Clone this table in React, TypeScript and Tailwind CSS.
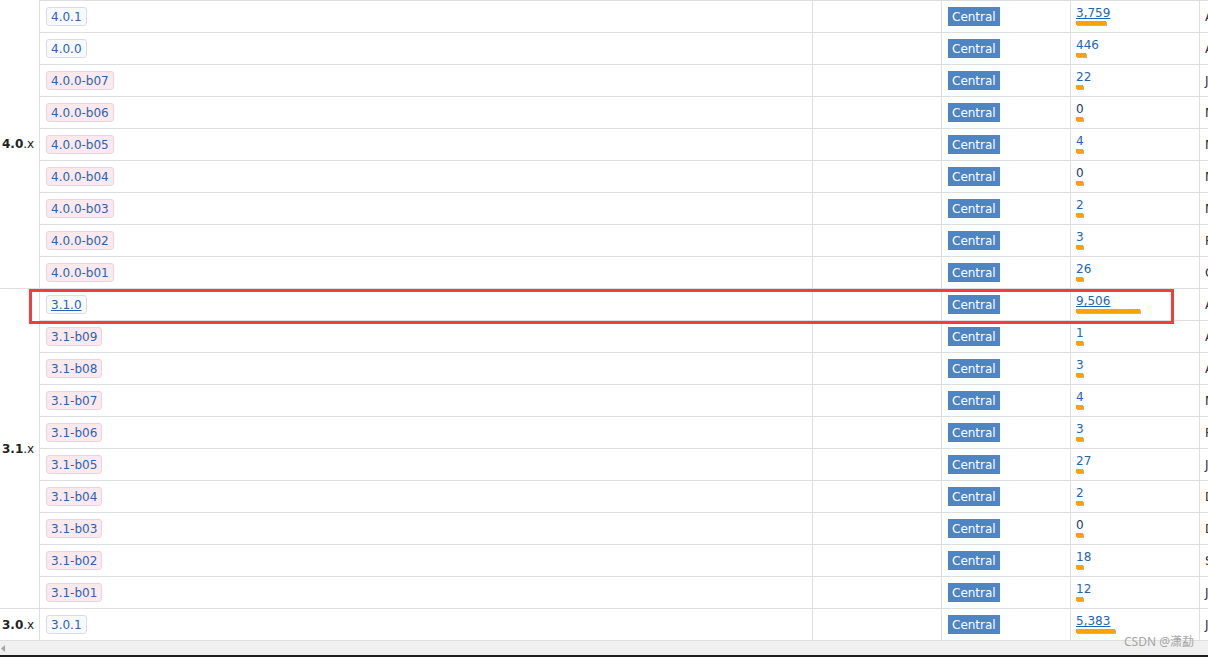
type Version = {
    name: string;
    beta: boolean;
    downloads: number;
    date: string;
};

type Group = {
    major: string;
    versions: Version[];
};

const groups: Group[] = [
    {
        major: "4.0",
        versions: [
            { name: "4.0.1", beta: false, downloads: 3759, date: "Apr 24, 2023" },
            { name: "4.0.0", beta: false, downloads: 446, date: "Aug 09, 2022" },
            { name: "4.0.0-b07", beta: true, downloads: 22, date: "Jul 18, 2022" },
            { name: "4.0.0-b06", beta: true, downloads: 0, date: "May 31, 2022" },
            { name: "4.0.0-b05", beta: true, downloads: 4, date: "May 06, 2022" },
            { name: "4.0.0-b04", beta: true, downloads: 0, date: "Mar 28, 2022" },
            { name: "4.0.0-b03", beta: true, downloads: 2, date: "Mar 04, 2022" },
            { name: "4.0.0-b02", beta: true, downloads: 3, date: "Feb 11, 2022" },
            { name: "4.0.0-b01", beta: true, downloads: 26, date: "Oct 29, 2021" },
        ],
    },
    {
        major: "3.1",
        versions: [
            { name: "3.1.0", beta: false, downloads: 9506, date: "Aug 10, 2021" },
            { name: "3.1-b09", beta: true, downloads: 1, date: "Apr 29, 2021" },
            { name: "3.1-b08", beta: true, downloads: 3, date: "Apr 01, 2021" },
            { name: "3.1-b07", beta: true, downloads: 4, date: "Mar 09, 2021" },
            { name: "3.1-b06", beta: true, downloads: 3, date: "Feb 04, 2021" },
            { name: "3.1-b05", beta: true, downloads: 27, date: "Jan 13, 2021" },
            { name: "3.1-b04", beta: true, downloads: 2, date: "Dec 10, 2020" },
            { name: "3.1-b03", beta: true, downloads: 0, date: "Dec 03, 2020" },
            { name: "3.1-b02", beta: true, downloads: 18, date: "Sep 22, 2020" },
            { name: "3.1-b01", beta: true, downloads: 12, date: "Jun 12, 2020" },
        ],
    },
    {
        major: "3.0",
        versions: [{ name: "3.0.1", beta: false, downloads: 5383, date: "Jan 21, 2020" }],
    },
];

const font = { fontFamily: '"DejaVu Sans", Verdana, sans-serif' };

const underlined = ["3.1.0"];

const VersionRow = ({ v, last, first }: { v: Version; last: boolean; first: boolean }) => {
    const big = v.downloads >= 1000;
    // each row is 31px of content plus its lines
    let cls = "flex border-[#dedede] ";
    if (first) cls += "h-[33px] border-t border-b";
    else if (last) cls += "h-[31px]";
    else cls += "h-[32px] border-b";
    return (
        <div className={cls}>
            <div className="w-[773px] shrink-0 border-r border-[#dedede] flex items-center px-[6px]">
                <span
                    className={
                        "inline-flex items-center h-[19px] px-[4px] border rounded-[3px] text-[12px] text-[#2a63b4] " +
                        (v.beta
                            ? "bg-[#fce9ed] border-[#ecd5da]"
                            : "bg-[#f8f9fd] border-[#d9dce4]") +
                        (underlined.includes(v.name) ? " underline" : "")
                    }
                >
                    {v.name}
                </span>
            </div>
            <div className="w-[129px] shrink-0 border-r border-[#dedede]" />
            <div className="w-[129px] shrink-0 border-r border-[#dedede] flex items-center px-[6px]">
                <span className="inline-flex items-center h-[19px] px-[4px] bg-[#4f84c5] text-white text-[12px]">
                    Central
                </span>
            </div>
            <div className="w-[129px] shrink-0 border-r border-[#dedede] flex flex-col items-start pl-[5px] pt-[5px]">
                <span
                    className={
                        "text-[12px] leading-[14px] " +
                        (v.downloads === 0 ? "text-[#22385c]" : "text-[#2365b5]") +
                        (big ? " underline underline-offset-[1px]" : "")
                    }
                >
                    {v.downloads.toLocaleString("en-US")}
                </span>
                <span
                    className="mt-[1px] h-[4px] bg-[#f9a300] shadow-[1px_1px_0_#b5b5b5]"
                    style={{ width: Math.round(7 + v.downloads * 0.006) }}
                />
            </div>
            <div className="w-[200px] shrink-0 flex items-center pl-[5px] text-[12px] text-[#2b2b2b] whitespace-nowrap">
                {v.date}
            </div>
        </div>
    );
};

const GroupBlock = ({ g, first }: { g: Group; first: boolean }) => (
    <div className="flex border-b border-[#dedede]">
        <div className="w-[40px] shrink-0 border-r border-[#dedede] flex items-center pl-[2px] text-[12px] text-[#222]">
            <span className="font-bold">{g.major}</span>
            <span>.x</span>
        </div>
        <div className="flex flex-col">
            {g.versions.map((v, i) => (
                <VersionRow
                    key={v.name}
                    v={v}
                    first={first && i === 0}
                    last={i === g.versions.length - 1}
                />
            ))}
        </div>
    </div>
);

export default function App() {
    return (
        <div
            className="relative w-[1208px] h-[657px] overflow-hidden bg-white flex flex-col"
            style={font}
        >
            <div className="flex flex-col">
                {groups.map((g, i) => (
                    <GroupBlock key={g.major} g={g} first={i === 0} />
                ))}
            </div>

            {/* horizontal scrollbar */}
            <div className="h-[14px] shrink-0 bg-[#f0f0f0] flex items-center pl-[1px]">
                <svg width="5" height="7" viewBox="0 0 5 7">
                    <path d="M4 0 L0 3.5 L4 7 Z" fill="#a3a3a3" />
                </svg>
            </div>
            <div className="h-[2px] shrink-0 bg-[#1e1e1e]" />

            {/* red highlight around 3.1.0 */}
            <div className="absolute left-[29px] top-[289px] w-[1145px] h-[35px] border-[3px] border-[#f03e3e]" />

            <div
                className="absolute left-[1124px] top-[636px] text-[12px] leading-[12px] text-[#a5a5a5] whitespace-nowrap"
                style={{ fontFamily: '"Noto Sans", "Noto Sans CJK SC", sans-serif' }}
            >
                CSDN @潇勐
            </div>
        </div>
    );
}
